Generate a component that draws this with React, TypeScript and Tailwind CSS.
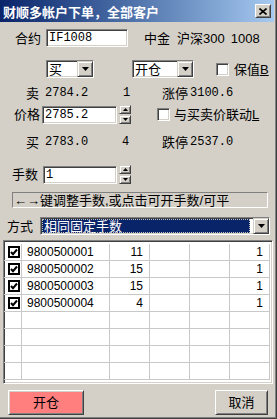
import React from "react";

const sunken =
  "border border-t-[#808080] border-l-[#808080] border-b-white border-r-white shadow-[inset_1px_1px_0_#404040,inset_-1px_-1px_0_#d4d0c8]";
const raised =
  "border border-t-[#d4d0c8] border-l-[#d4d0c8] border-b-[#404040] border-r-[#404040] shadow-[inset_1px_1px_0_#ffffff,inset_-1px_-1px_0_#808080]";
const btnRaised =
  "border border-t-white border-l-white border-b-[#404040] border-r-[#404040] shadow-[inset_1px_1px_0_#d4d0c8,inset_-1px_-1px_0_#808080]";
const mono = "font-['Liberation_Mono',monospace] text-[12px]";

function DownArrow() {
  return (
    <svg width="7" height="4" viewBox="0 0 7 4">
      <path d="M0 0H7L3.5 4Z" fill="#000" />
    </svg>
  );
}

function UpArrow() {
  return (
    <svg width="5" height="3" viewBox="0 0 5 3">
      <path d="M0 3H5L2.5 0Z" fill="#000" />
    </svg>
  );
}

function SmallDown() {
  return (
    <svg width="5" height="3" viewBox="0 0 5 3">
      <path d="M0 0H5L2.5 3Z" fill="#000" />
    </svg>
  );
}

function DropBtn() {
  return (
    <div className={`${raised} w-[16px] h-full bg-[#d4d0c8] flex items-center justify-center shrink-0`}>
      <DownArrow />
    </div>
  );
}

function Spinner() {
  return (
    <div className="ml-[2px] flex flex-col gap-[1px] w-[12px]">
      <div className={`${raised} h-[9px] bg-[#d4d0c8] flex items-center justify-center`}>
        <UpArrow />
      </div>
      <div className={`${raised} h-[9px] bg-[#d4d0c8] flex items-center justify-center`}>
        <SmallDown />
      </div>
    </div>
  );
}

function CheckBox() {
  return <div className={`${sunken} w-[13px] h-[13px] bg-white shrink-0`} />;
}

function GridCheck() {
  return (
    <div className="w-[12px] h-[12px] border-2 border-black bg-white flex items-center justify-center">
      <svg width="8" height="8" viewBox="0 0 8 8">
        <path d="M1 4L3 6.2L7 1.5" stroke="#000" strokeWidth="2" fill="none" />
      </svg>
    </div>
  );
}

const rows: { id: string; a: string }[] = [
  { id: "9800500001", a: "11" },
  { id: "9800500002", a: "15" },
  { id: "9800500003", a: "15" },
  { id: "9800500004", a: "4" },
];

export default function App() {
  const empty = Array.from({ length: 4 });
  return (
    <div className="w-[277px] h-[419px] bg-[#d4d0c8] flex flex-col overflow-hidden text-black text-[13px] leading-none font-['Liberation_Sans','Noto_Sans_CJK_SC',sans-serif] shadow-[inset_-1px_-1px_0_#404040,inset_-2px_-2px_0_#808080]">
      {/* title bar */}
      <div className="w-[274px] h-[22px] shrink-0 bg-linear-to-r from-[#0a246a] to-[#a6caf0] flex items-center">
        <span className="ml-[3px] text-white font-bold text-[13px] font-['Noto_Sans_CJK_SC',sans-serif] leading-none">
          财顺多帐户下单，全部客户
        </span>
        <div className={`${btnRaised} ml-auto mr-[3px] w-[16px] h-[14px] bg-[#d4d0c8] flex items-center justify-center`}>
          <svg width="8" height="7" viewBox="0 0 8 7">
            <path d="M0.5 0.5L7.5 6.5M7.5 0.5L0.5 6.5" stroke="#000" strokeWidth="1.6" />
          </svg>
        </div>
      </div>

      {/* row 1 */}
      <div className="mt-[7px] h-[18px] flex items-center shrink-0">
        <span className="ml-[15px] w-[31px]">合约</span>
        <div className={`${sunken} w-[82px] h-[18px] bg-white flex items-center pl-[2px] ${mono}`}>IF1008</div>
        <span className="ml-[16px] mr-[7px]">中金</span>
        <span className="mr-[6px]">沪深300</span>
        <span>1008</span>
      </div>

      {/* row 2 */}
      <div className="mt-[13px] h-[18px] flex items-center shrink-0">
        <div className={`${sunken} ml-[46px] w-[48px] h-[18px] bg-white flex items-center`}>
          <span className="flex-1 pl-[2px]">买</span>
          <DropBtn />
        </div>
        <div className={`${sunken} ml-[38px] w-[62px] h-[18px] bg-white flex items-center`}>
          <span className="flex-1 pl-[2px]">开仓</span>
          <DropBtn />
        </div>
        <div className="ml-[22px]">
          <CheckBox />
        </div>
        <span className="ml-[5px]">
          保值<span className="underline">B</span>
        </span>
      </div>

      {/* row 3 */}
      <div className="mt-[8px] h-[14px] flex items-center shrink-0">
        <span className="ml-[26px] w-[19px]">卖</span>
        <span className={`${mono} w-[78px]`}>2784.2</span>
        <span className={`${mono} w-[39px]`}>1</span>
        <span className="w-[28px]">涨停</span>
        <span className={mono}>3100.6</span>
      </div>

      {/* row 4 */}
      <div className="mt-[5px] h-[19px] flex items-center shrink-0">
        <span className="ml-[14px] w-[28px]">价格</span>
        <div className={`${sunken} w-[75px] h-[18px] bg-white flex items-center pl-[2px] ${mono}`}>2785.2</div>
        <Spinner />
        <div className="ml-[26px]">
          <CheckBox />
        </div>
        <span className="ml-[4px]">
          与买卖价联动<span className="underline">L</span>
        </span>
      </div>

      {/* row 5 */}
      <div className="mt-[11px] h-[14px] flex items-center shrink-0">
        <span className="ml-[26px] w-[19px]">买</span>
        <span className={`${mono} w-[77px]`}>2783.0</span>
        <span className={`${mono} w-[40px]`}>4</span>
        <span className="w-[28px]">跌停</span>
        <span className={mono}>2537.0</span>
      </div>

      {/* row 6 */}
      <div className="mt-[16px] h-[19px] flex items-center shrink-0">
        <span className="ml-[12px] w-[31px]">手数</span>
        <div className={`${sunken} w-[74px] h-[18px] bg-white flex items-center pl-[2px] ${mono}`}>1</div>
        <Spinner />
      </div>

      {/* row 7 */}
      <div className="mt-[8px] h-[16px] flex shrink-0">
        <div className="ml-[12px] w-[256px] h-[16px] border border-t-[#808080] border-l-[#808080] border-b-white border-r-white flex items-center pl-[1px] whitespace-nowrap">
          ←→键调整手数,或点击可开手数/可平
        </div>
      </div>

      {/* row 8 */}
      <div className="mt-[9px] h-[18px] flex items-center shrink-0">
        <span className="ml-[7px] w-[33px]">方式</span>
        <div className={`${sunken} w-[230px] h-[18px] bg-white flex items-center`}>
          <div className="flex-1 h-full p-[1px]">
            <div className="h-full bg-[#0a246a] text-white flex items-center pl-[2px] outline-1 outline-dotted outline-[#c0c0c0] -outline-offset-1 mr-[2px]">
              相同固定手数
            </div>
          </div>
          <DropBtn />
        </div>
      </div>

      {/* grid */}
      <div className={`${sunken} mt-[5px] ml-[3px] w-[270px] h-[144px] bg-white shrink-0 overflow-hidden pt-[3px] text-[12px]`}>
        {rows.map((r) => (
          <div key={r.id} className="flex h-[17px]">
            <div className="w-[18px] border-r border-b border-[#c8c8c8] flex items-center pl-[4px]">
              <GridCheck />
            </div>
            <div className="w-[88px] border-r border-b border-[#c8c8c8] flex items-center pl-[5px]">{r.id}</div>
            <div className="w-[40px] border-r border-b border-[#c8c8c8] flex items-center justify-end pr-[6px]">{r.a}</div>
            <div className="w-[40px] border-r border-b border-[#c8c8c8]" />
            <div className="w-[40px] border-r border-b border-[#c8c8c8]" />
            <div className="w-[40px] border-r border-b border-[#c8c8c8] flex items-center justify-end pr-[6px]">1</div>
          </div>
        ))}
        {empty.map((_, i) => (
          <div key={i} className="flex h-[17px]">
            <div className="w-[18px] border-r border-b border-[#c8c8c8]" />
            <div className="w-[88px] border-r border-b border-[#c8c8c8]" />
            <div className="w-[40px] border-r border-b border-[#c8c8c8]" />
            <div className="w-[40px] border-r border-b border-[#c8c8c8]" />
            <div className="w-[40px] border-r border-b border-[#c8c8c8]" />
            <div className="w-[40px] border-r border-b border-[#c8c8c8]" />
          </div>
        ))}
      </div>

      {/* buttons */}
      <div className="mt-[6px] h-[25px] flex shrink-0">
        <div className={`${btnRaised} ml-[8px] w-[76px] h-[25px] bg-[#ff7f7f] flex items-center justify-center`}>开仓</div>
        <div className={`${btnRaised} ml-[131px] w-[53px] h-[25px] bg-[#d4d0c8] flex items-center justify-center`}>取消</div>
      </div>
    </div>
  );
}
